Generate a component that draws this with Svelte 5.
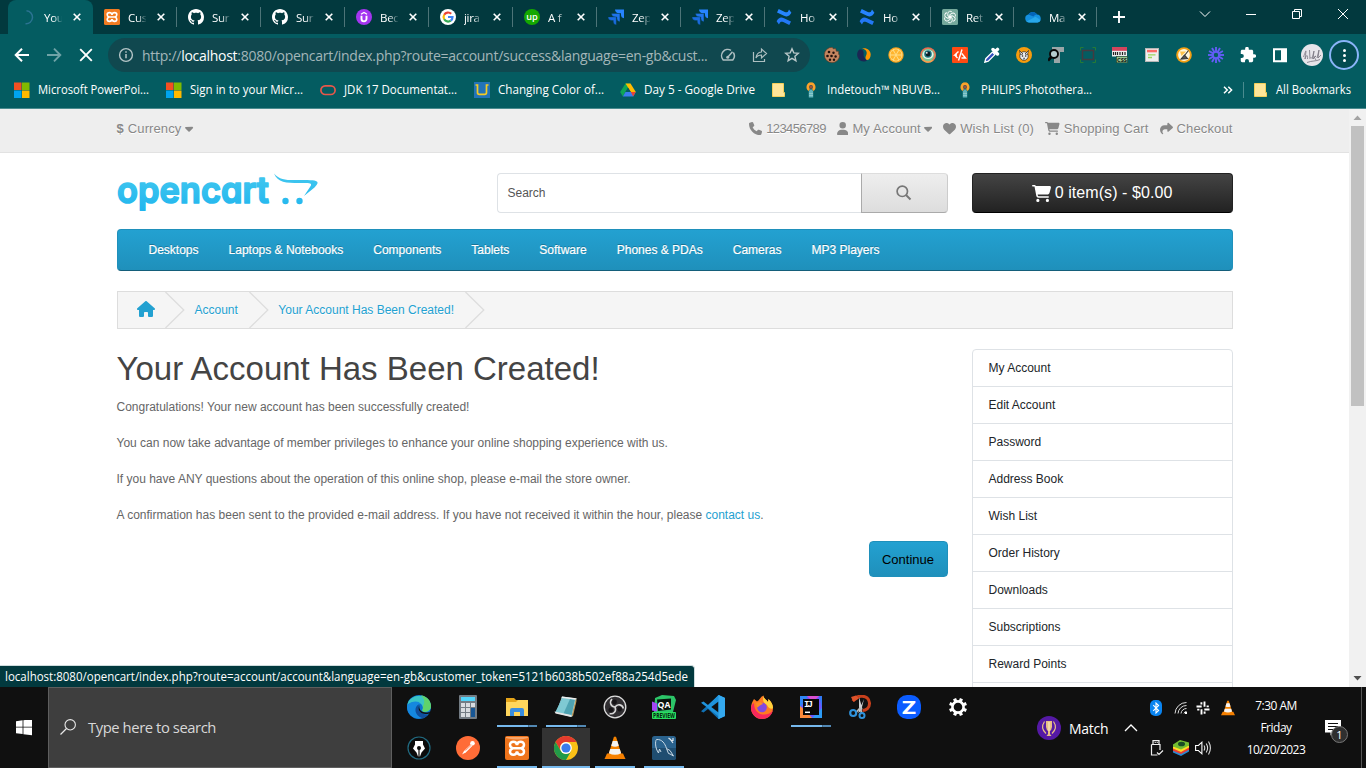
<script>
  const tabs = [
    { icon: 'spinner', title: 'You', active: true },
    { icon: 'xampp', title: 'Cus' },
    { icon: 'github', title: 'Sur' },
    { icon: 'github', title: 'Sur' },
    { icon: 'udemy', title: 'Bec' },
    { icon: 'google', title: 'jira' },
    { icon: 'upwork', title: 'A f' },
    { icon: 'jira', title: 'Zep' },
    { icon: 'jira', title: 'Zep' },
    { icon: 'confluence', title: 'Ho' },
    { icon: 'confluence', title: 'Ho' },
    { icon: 'gpt', title: 'Ret' },
    { icon: 'cloud', title: 'Ma' }
  ];
  const extensions = ['cookie', 'similar', 'orange', 'eye', 'redslash', 'dropper', 'palette', 'lens', 'frame', 'css', 'page', 'broom', 'loom', 'puzzle', 'sidepanel', 'profile'];
  const bookmarks = [
    { icon: 'ms', text: 'Microsoft PowerPoi...', width: 152, textWidth: 111 },
    { icon: 'ms', text: 'Sign in to your Micr...', width: 154, textWidth: 113 },
    { icon: 'oracle', text: 'JDK 17 Documentat...', width: 154, textWidth: 113 },
    { icon: 'ubook', text: 'Changing Color of...', width: 146, textWidth: 106 },
    { icon: 'drive', text: 'Day 5 - Google Drive', width: 151, textWidth: 111 },
    { icon: 'note', text: '', width: 32 },
    { icon: 'bulb', text: 'Indetouch™ NBUVB...', width: 154, textWidth: 113 },
    { icon: 'bulb', text: 'PHILIPS Photothera...', width: 154, textWidth: 111 }
  ];
  const menu = ['Desktops', 'Laptops & Notebooks', 'Components', 'Tablets', 'Software', 'Phones & PDAs', 'Cameras', 'MP3 Players'];
  const account = ['My Account', 'Edit Account', 'Password', 'Address Book', 'Wish List', 'Order History', 'Downloads', 'Subscriptions', 'Reward Points', ''];
  const apps = [
    ['edge'], ['calc'], ['folder', 'multi'], ['notepad', 'multi'], ['obs'], ['aqua'], ['vscode'], ['firefox'], ['intellij', 'multi'], ['snip'], ['zoom'], ['gear'],
    ['pen'], ['postman'], ['xampp', 'open'], ['chrome', 'open current'], ['vlc', 'open'], ['mysql', 'open']
  ];
  const fa = {
    phone: [512, 'M164.9 24.6c-7.7-18.6-28-28.5-47.4-23.2l-88 24C12.1 30.2 0 46 0 64C0 311.4 200.6 512 448 512c18 0 33.8-12.1 38.6-29.5l24-88c5.3-19.4-4.6-39.7-23.2-47.4l-96-40c-16.3-6.8-35.2-2.1-46.3 11.6L304.7 368C234.3 334.7 177.3 277.7 144 207.3L193.3 167c13.7-11.2 18.4-30 11.6-46.3l-40-96z'],
    user: [448, 'M224 256A128 128 0 1 0 224 0a128 128 0 1 0 0 256zm-45.7 48C79.8 304 0 383.8 0 482.3C0 498.7 13.3 512 29.7 512H418.3c16.4 0 29.7-13.3 29.7-29.7C448 383.8 368.2 304 269.7 304H178.3z'],
    heart: [512, 'M47.6 300.4L228.3 469.1c7.5 7 17.4 10.9 27.7 10.9s20.2-3.9 27.7-10.9L464.4 300.4c30.4-28.3 47.6-68 47.6-109.5v-5.8c0-69.9-50.5-129.5-119.4-141C347 36.5 300.6 51.4 268 84L256 96 244 84c-32.6-32.6-79-47.5-124.6-39.9C50.5 55.6 0 115.2 0 185.1v5.8c0 41.5 17.2 81.2 47.6 109.5z'],
    cart: [576, 'M0 24C0 10.7 10.7 0 24 0H69.5c22 0 41.5 12.8 50.6 32h411c26.3 0 45.5 25 38.6 50.4l-41 152.3c-8.5 31.4-37 53.3-69.5 53.3H170.7l5.4 28.5c2.2 11.3 12.1 19.5 23.6 19.5H488c13.3 0 24 10.7 24 24s-10.7 24-24 24H199.7c-34.6 0-64.3-24.6-70.7-58.5L77.4 54.5c-.7-3.8-4-6.5-7.9-6.5H24C10.7 48 0 37.3 0 24zM128 464a48 48 0 1 1 96 0 48 48 0 1 1 -96 0zm336-48a48 48 0 1 1 0 96 48 48 0 1 1 0-96z'],
    share: [512, 'M307 34.8c-11.5 5.1-19 16.6-19 29.2v64H176C78.8 128 0 206.8 0 304C0 417.3 81.5 467.9 100.2 478.1c2.5 1.4 5.3 1.9 8.1 1.9c10.9 0 19.7-8.9 19.7-19.7c0-7.5-4.3-14.4-9.8-19.5C108.8 431.9 96 414.4 96 384c0-53 43-96 96-96h96v64c0 12.6 7.4 24.1 19 29.2s25 3 34.4-5.4l160-144c6.7-6.1 10.6-14.7 10.6-23.8s-3.8-17.7-10.6-23.8l-160-144c-9.4-8.5-22.9-10.6-34.4-5.4z'],
    caret: [320, 'M137.4 374.6c12.5 12.5 32.8 12.5 45.3 0l128-128c9.2-9.2 11.9-22.9 6.9-34.9s-16.6-19.8-29.6-19.8L32 192c-12.9 0-24.6 7.8-29.6 19.8s-2.2 25.7 6.9 34.9l128 128z'],
    house: [576, 'M575.8 255.5c0 18-15 32.1-32 32.1h-32l.7 160.2c0 2.7-.2 5.4-.5 8.1V472c0 22.1-17.9 40-40 40H392c-22.1 0-40-17.9-40-40V384c0-17.7-14.3-32-32-32H256c-17.7 0-32 14.3-32 32v88c0 22.1-17.9 40-40 40H104c-22.1 0-40-17.9-40-40V287.6H32c-18 0-32-14-32-32.1c0-9 3-17 10-24L266.4 8c7-7 15-8 22-8s15 2 21 7L564.8 231.5c8 7 12 15 11 24z']
  };
</script>

{#snippet solid(name, size)}
  <svg class="fa" viewBox="0 0 {fa[name][0]} 512" width={(size * fa[name][0]) / 512} height={size}><path fill="currentColor" d={fa[name][1]} /></svg>
{/snippet}

{#snippet small(name)}
  <svg class="ico" viewBox="0 0 16 16" width="16" height="16">
    {#if name === 'spinner'}
      <path d="M7 1.500a6.500 6.500 0 0 1-1 13" transform="translate(-0.500 0.300)" fill="none" stroke="#2b7392" stroke-width="1.500" />
    {:else if name === 'xampp'}
      <rect width="16" height="16" rx="1.500" fill="#f27c22" />
      <path d="M8 5.800C7.600 2.900 3.200 3 3.200 5.700c0 1.200.8 1.900 1.800 2.300C4 8.400 3.200 9.100 3.200 10.300c0 2.700 4.400 2.800 4.800-.1.400 2.900 4.800 2.800 4.800.1 0-1.200-.8-1.900-1.800-2.300 1-.4 1.800-1.100 1.800-2.300 0-2.700-4.400-2.800-4.800.1zM5.500 8h5" fill="none" stroke="#fff" stroke-width="1.600" />
    {:else if name === 'github'}
      <path fill="#fff" d="M8 0C3.58 0 0 3.58 0 8c0 3.54 2.29 6.53 5.47 7.59.4.07.55-.17.55-.38 0-.19-.01-.82-.01-1.49-2.01.37-2.53-.49-2.69-.94-.09-.23-.48-.94-.82-1.13-.28-.15-.68-.52-.01-.53.63-.01 1.08.58 1.23.82.72 1.21 1.87.87 2.33.66.07-.52.28-.87.51-1.07-1.78-.2-3.64-.89-3.64-3.95 0-.87.31-1.59.82-2.15-.08-.2-.36-1.02.08-2.12 0 0 .67-.21 2.2.82.64-.18 1.32-.27 2-.27s1.36.09 2 .27c1.53-1.04 2.2-.82 2.2-.82.44 1.1.16 1.92.08 2.12.51.56.82 1.27.82 2.15 0 3.07-1.87 3.75-3.65 3.95.29.25.54.73.54 1.48 0 1.07-.01 1.93-.01 2.2 0 .21.15.46.55.38A8.01 8.01 0 0016 8c0-4.42-3.58-8-8-8z" />
    {:else if name === 'udemy'}
      <circle cx="8" cy="8" r="8" fill="#a435f0" />
      <path d="M5.500 6.800v3a2.500 2.600 0 0 0 5 0v-3" fill="none" stroke="#fff" stroke-width="1.900" />
      <path d="M5 5.200L8 3.400l3 1.800" fill="none" stroke="#fff" stroke-width="1.300" />
    {:else if name === 'google'}
      <circle cx="8" cy="8" r="8" fill="#fff" />
      <g fill="none" stroke-width="2.200">
        <path d="M4.200 5.700A4.500 4.500 0 0 1 11.200 4.800" stroke="#ea4335" />
        <path d="M4.200 5.700a4.600 4.600 0 0 0 0 4.600" stroke="#fbbc05" />
        <path d="M4.200 10.300a4.500 4.500 0 0 0 6.600 1.300" stroke="#34a853" />
        <path d="M10.800 11.600A4.500 4.500 0 0 0 12.500 8H8" stroke="#4285f4" />
      </g>
    {:else if name === 'upwork'}
      <circle cx="8" cy="8" r="8" fill="#14a800" />
      <text x="8" y="10.600" text-anchor="middle" font-size="9.500" font-weight="600" fill="#fff" textLength="11.500" lengthAdjust="spacingAndGlyphs">up</text>
    {:else if name === 'jira'}
      <path d="M7 .5h9v8.800a3.600 3.600 0 0 1-3-3.500V4.200h-2A3.800 3.800 0 0 1 7 .5z" fill="#2684ff" />
      <path d="M3.500 4.500h8.400v8.300a3.600 3.600 0 0 1-3-3.500V8h-1.600a3.800 3.800 0 0 1-3.800-3.500z" fill="#1f74ec" stroke="#02393e" stroke-width="0.300" />
      <path d="M0 8h8.300v8a3.600 3.600 0 0 1-3-3.500v-1H3.800A3.800 3.800 0 0 1 0 8z" fill="#1a6ce0" stroke="#02393e" stroke-width="0.300" />
    {:else if name === 'confluence'}
      <path d="M.6 12.200C2.600 8.900 4.600 7.700 8 9.300l7 3.200-1.700 3.400-6.100-2.800c-1.700-.8-2.700-.5-3.500 1L3 15.600z" fill="#2378f5" />
      <path d="M15.400 3.800C13.400 7.100 11.400 8.300 8 6.700L1 3.500 2.700.1l6.100 2.800c1.700.8 2.700.5 3.500-1L13 .4z" fill="#2684ff" />
    {:else if name === 'gpt'}
      <rect width="16" height="16" rx="1.500" fill="#75a99c" />
      <g fill="none" stroke="#fff" stroke-width="0.900">
        {#each [0, 60, 120, 180, 240, 300] as a (a)}
          <path transform="rotate({a} 8 8)" d="M5.800 6.900V4.500a2.400 2.400 0 0 1 4.400-1.200M5.800 6.900l3.700 2" />
        {/each}
      </g>
    {:else if name === 'cloud'}
      <path d="M4 13.400a4 4 0 0 1-.6-7.900A5 5 0 0 1 12 5.500a4 4 0 0 1 .6 7.900z" fill="#1490df" />
      <path d="M3.400 5.500a5 5 0 0 1 8.600 0c-1.600 0-2.600.8-3.600 1.900z" fill="#0364b8" />
      <path d="M1.500 12.500l9-4.700 5 3.300a3 3 0 0 1-2.900 2.300H4z" fill="#28a8ea" />
    {:else if name === 'cookie'}
      <path d="M8.500.3a7.700 7.700 0 1 0 7.200 7.500l-1-.4V4.300l-2.400-.1-.5-2.600-2.600.2z" fill="#c48660" stroke="#55341f" stroke-width="0.600" />
      <g fill="#22120c"><circle cx="5" cy="5" r="1.300" /><circle cx="9.500" cy="5.800" r="1.200" /><circle cx="3.500" cy="9" r="1.300" /><circle cx="7.500" cy="9" r="1.300" /><circle cx="11.600" cy="9.500" r="1.200" /><circle cx="6" cy="12.800" r="1.200" /><circle cx="10" cy="12.800" r="1.200" /></g>
    {:else if name === 'similar'}
      <path d="M3.600 2.500C6.800 2 8 4.500 7.600 7c-.4 2.500 1 4.300 3.400 6.500-2 1.600-6 1.300-8.200-1.200C.4 9.300.6 4.500 3.600 2.500z" fill="#1b2653" />
      <path d="M6 1.500c4.500-1.200 8.700 1.600 8.700 6 0 3-1.400 5-3.400 5.600-2.400-.8-2-3-1-5C11.600 5 10 2.200 6 1.500z" fill="#ff9400" />
    {:else if name === 'orange'}
      <circle cx="8" cy="8" r="7.700" fill="#f8a11b" /><circle cx="8" cy="8" r="6.500" fill="#ffdf8b" />
      {#each [0, 60, 120, 180, 240, 300] as a (a)}
        <path transform="rotate({a} 8 8)" d="M8 7.200L5.700 3q2.300-1.500 4.600 0z" fill="#ffb52e" />
      {/each}
    {:else if name === 'eye'}
      <circle cx="8" cy="8" r="7.800" fill="#ec6a4e" /><path d="M.3 9a7.800 7.800 0 0 0 13 4.700L8 8z" fill="#f3a24e" /><path d="M13.500 2.500a7.800 7.800 0 0 1 0 11L8 8z" fill="#e27f5b" /><circle cx="8" cy="8" r="6.200" fill="#7fc795" /><ellipse cx="8" cy="7.500" rx="5.400" ry="4.500" fill="#e6f5ec" /><circle cx="8" cy="7" r="3.800" fill="#1a7781" /><circle cx="8" cy="7" r="2.400" fill="#0a1c24" /><circle cx="6.800" cy="5.800" r="0.900" fill="#fff" />
    {:else if name === 'redslash'}
      <rect width="16" height="16" rx="1" fill="#ff4a12" />
      <path d="M10 2.500L6.500 13.500M6.500 4.500L2.800 8H5M2.800 8L5.500 11M9.800 6.500L13.500 11H9.500" fill="none" stroke="#fff" stroke-width="1.400" />
    {:else if name === 'dropper'}
      <path d="M.8 15.200l1-3.500 6.600-6.600 2.500 2.500-6.600 6.600z" fill="#334ebd" stroke="#fff" stroke-width="1.300" />
      <path d="M9 2.500l4.500 4.500M10.800 5L13.500 2.400" stroke="#fff" stroke-width="3.400" stroke-linecap="round" />
    {:else if name === 'palette'}
      <circle cx="8" cy="8" r="8" fill="#f79c0d" /><ellipse cx="8" cy="9" rx="4.200" ry="4.300" fill="#eee" stroke="#222" stroke-width="0.700" /><path d="M3.500 3.500L7 7l-2.500.5zM12.500 3.500L9 7l2.500.5z" fill="#fff" stroke="#222" stroke-width="0.700" /><circle cx="6.500" cy="9" r="0.800" fill="#222" /><circle cx="9.700" cy="9" r="0.800" fill="#222" /><path d="M8 10l1 2-2 .5z" fill="#345" />
    {:else if name === 'lens'}
      <path d="M4 0h12v5h-4v11H6V6H4z" fill="#9aa6a8" /><circle cx="6" cy="7" r="4" fill="#b6cdd0" stroke="#080808" stroke-width="1.900" /><path d="M3.300 10L0 13.500" stroke="#080808" stroke-width="2.600" />
    {:else if name === 'frame'}
      <rect x="2.500" y="3.500" width="11" height="9" fill="none" stroke="#443b40" stroke-width="1.500" /><path d="M.5 3.500v-3h3M12.500.5h3v3M15.500 12.500v3h-3M3.500 15.500h-3v-3" stroke="#267b35" fill="none" />
    {:else if name === 'css'}
      <rect x="0" y="0" width="15" height="9.500" fill="#eee" /><rect x="0" y="0" width="15" height="3.800" fill="#d4445c" /><path d="M1.500 5v3M3.500 5v3M5.500 5v3M8 5v3M10.500 5v3M13 5v3" stroke="#222" stroke-width="1.200" /><rect x="4.500" y="9.500" width="11" height="6.300" fill="#9bc992" stroke="#223e2a" stroke-width="0.600" /><text x="10" y="14.900" text-anchor="middle" font-size="5.800" font-weight="700" fill="#111">CSS</text>
    {:else if name === 'page'}
      <rect x="1.500" y="1.500" width="13" height="13" fill="#eee" stroke="#b6b6b6" /><rect x="3" y="2.800" width="10" height="2.500" fill="#fb6b68" /><path d="M4 7.800h7.500M4 10.500h4" stroke="#9bd45e" stroke-width="1.300" />
    {:else if name === 'broom'}
      <circle cx="8" cy="8" r="7.800" fill="#f6a012" /><circle cx="8" cy="8" r="5.900" fill="#fff7dd" /><path d="M4 4.500h6L5.500 9z" fill="#ffc34a" /><path d="M12.500 3.500L8.500 8.500M5 12l3.500-4 3 3.500z" stroke="#333" stroke-width="1.100" fill="#555" />
    {:else if name === 'loom'}
      <g stroke="#625df5" stroke-width="1.900">
        {#each [0, 30, 60, 90, 120, 150, 180, 210, 240, 270, 300, 330] as a (a)}<path transform="rotate({a} 8 8)" d="M8 0v5.200" />{/each}
      </g><circle cx="8" cy="8" r="3" fill="none" stroke="#625df5" stroke-width="1.600" />
    {:else if name === 'puzzle'}
      <path transform="translate(-0.700 -0.900) scale(0.730)" fill="#fff" d="M20.500 11H19V7c0-1.100-.9-2-2-2h-4V3.500a2.500 2.500 0 0 0-5 0V5H4c-1.100 0-2 .9-2 2v3.800h1.500a2.700 2.700 0 0 1 0 5.400H2V20c0 1.100.9 2 2 2h3.800v-1.500a2.700 2.700 0 0 1 5.400 0V22H17c1.100 0 2-.9 2-2v-4h1.500a2.500 2.500 0 0 0 0-5z" />
    {:else if name === 'sidepanel'}
      <path fill="#fff" fill-rule="evenodd" d="M1 1.200h14v14H1zM3 3.200v10h6v-10z" />
    {:else if name === 'ms'}
      <path d="M0 .5h7.500V8H0z" fill="#f25022" /><path d="M8 .5h7.500V8H8z" fill="#7fba00" /><path d="M0 8.500h7.500V16H0z" fill="#00a4ef" /><path d="M8 8.500h7.500V16H8z" fill="#ffb900" />
    {:else if name === 'oracle'}
      <rect x="0.900" y="3.900" width="14.200" height="8.600" rx="4.300" fill="none" stroke="#e8574a" stroke-width="1.700" />
    {:else if name === 'ubook'}
      <rect width="16" height="16" fill="#2374b8" /><path d="M1.500 3H3.500v7.500q0 1.800 1.800 1.800h5.400q1.800 0 1.800-1.800V3h2" fill="none" stroke="#f5cb22" stroke-width="1.700" />
    {:else if name === 'drive'}
      <path d="M5.500 1.500h5L5.500 10 2.800 14.500.2 10z" fill="#0fa456" /><path d="M5.500 1.500h5L15.800 10h-5z" fill="#ffba00" /><path d="M5.500 10h10.300l-2.600 4.500H2.800z" fill="#3b7ded" /><path d="M8 5.800l2.700 4.200H5.500z" fill="#045c61" /><path d="M10.800 10h5l-2.600 4.500z" fill="#ea4335" />
    {:else if name === 'note'}
      <path d="M1.500 1.500h11v9h1v4h-12z" fill="#ffe599" stroke="#f4cf5a" />
    {:else if name === 'bulb'}
      <path d="M5.800 9L8 7l2.200 2v6.500H5.800z" fill="#61b4bb" /><path d="M8 1.500A3.600 3.600 0 0 1 9.700 8M8 1.500A3.600 3.600 0 0 0 6.300 8" fill="none" stroke="#fba22a" stroke-width="2.600" /><circle cx="8" cy="5" r="1.800" fill="#9b533e" /><path d="M6 11.500h4M6 13.500h4" stroke="#8cc8cc" />
    {/if}
  </svg>
{/snippet}

{#snippet vlc(size)}
  <svg class="ico" viewBox="0 0 24 24" width={size} height={size}>
    <path d="M4 17.500h16l2.500 5.500h-21z" fill="#f57f00" /><path d="M10.700 1.500Q12-.3 13.300 1.500L18.500 18.500q-6.500 3.500-13 0z" fill="#f58300" /><path d="M9.700 5h4.600l1.500 4.800q-3.800 1.700-7.600 0zM7.200 13h9.600l1.300 4.300q-6.100 3-12.200 0z" fill="#f3f3f3" />
  </svg>
{/snippet}

{#snippet app(name)}
  <svg class="ico" viewBox="0 0 24 24" width="24" height="24">
    {#if name === 'edge'}
      <circle cx="12" cy="12" r="12" fill="#0c74cf" />
      <path d="M.3 10C2-1.500 22-3.500 24 11c.3 5-5 6.800-8 5.500-2-1 .2-2-.2-4.700C15 7 5.500 4.500.3 10z" fill="#3ac5c5" />
      <path d="M14 .2C20 1.500 24 5.500 24 11c0 4.500-5 6.800-8 5.500-2-1 1-2-.3-5C18 8 18 4 14 .2z" fill="#5fd36b" />
      <path d="M.3 10C4 6 12 5 13.500 9 8 9 7.500 18 15 22.500 8 26-1.500 19 .3 10z" fill="#1588df" />
      <path d="M12.500 9.300c-3 3.200-1 10.700 8.500 10.200-2 2.800-4 3.600-6 3.600-8-2.500-8.500-12-2.500-13.800z" fill="#114e9c" />
      <path d="M12.500 10c-1 3 1 7.500 6.500 7.600 2 0 3.500-.6 4.500-1.300l-1.200 2.200c-8 2.500-13-3.700-9.800-8.500z" fill="#101010" />
    {:else if name === 'calc'}
      <rect x="3" y="0" width="18" height="24" rx="1" fill="#737c84" /><rect x="5" y="2" width="14" height="4" fill="#51d5fb" />
      <path d="M5 8h4v4H5zM10 8h4v4h-4zM15 8h4v4h-4zM5 13h4v4H5zM10 13h4v4h-4zM5 18h4v4H5zM10 18h4v4h-4z" fill="#d8dce0" /><path d="M15 13h4v9h-4z" fill="#175694" />
    {:else if name === 'folder'}
      <path d="M1 3h8l2 2h12v16H1z" fill="#e5a51a" /><path d="M1 7h10l2-2h10v16H1z" fill="#ffd65c" /><path d="M5 21v-6q0-2 2-2h10q2 0 2 2v6h-4v-4H9v4z" fill="#3a8dde" />
    {:else if name === 'notepad'}
      <path d="M8 1.500l14.500 2-4.500 18.500-16-4z" fill="#9fd6dd" /><path d="M8.500 3L21 4.500l-3.500 16L1.500 17z" fill="#4fa3b2" /><path d="M8.500 3L16 4 9.500 18.500l-8-1.500z" fill="#7fc9d3" /><path d="M8 1.500l14.500 1.700-.5 1.500L7.500 3z" fill="#eee" /><path d="M22 3l.5 3-3.500 15-1.500.5z" fill="#bf9a5b" /><path d="M.5 16.500l17 3.500-.5 2L1.500 18.500z" fill="#e5e5e5" />
    {:else if name === 'obs'}
      <circle cx="12" cy="12" r="10.800" fill="#302e31" stroke="#ddd" stroke-width="1.300" />
      {#each [0, 120, 240] as a (a)}<path transform="rotate({a} 12 12)" d="M12 12C7.500 11.500 6.200 7 9 4" fill="none" stroke="#d6d6d6" stroke-width="1.600" /><circle cx="11.500" cy="7" r="2.400" transform="rotate({a} 12 12)" fill="#151316" />{/each}
    {:else if name === 'aqua'}
      <path d="M3 3l7-3 12 1 2 4-3 12H2z" fill="#2cc568" /><path d="M0 6.500l5 2v8l-5-1z" fill="#a348f4" /><path d="M5 4.500l14-1v11l-13 1.500z" fill="#08140d" />
      <text x="12" y="12.500" text-anchor="middle" font-size="9.500" font-weight="700" fill="#fff" textLength="13" lengthAdjust="spacingAndGlyphs">QA</text>
      <rect x="0" y="17" width="24" height="7" rx="1" fill="#27e060" /><text x="12" y="22.800" text-anchor="middle" font-size="6.200" font-weight="700" fill="#06260f" textLength="22" lengthAdjust="spacingAndGlyphs">PREVIEW</text>
    {:else if name === 'vscode'}
      <path d="M17.500 0L24 3v18l-6.500 3L7 14l-4.500 3.500L0 16.300 14.500 3.500z" fill="#1071b4" /><path d="M17.500 24L24 21V3l-6.500-3L7 10 2.500 6.500 0 7.700 17 21z" fill="#1f93dc" /><path d="M17.500 6.500v11L10.300 12z" fill="#101010" /><path d="M17.500 0L24 3v18l-6.500 3z" fill="#35a9ef" />
    {:else if name === 'firefox'}
      <path d="M4 4l3 2.500C10 5 10 2 13.500.5c0 3 3 4 4.500 6.500l.5-3c3 3 4.500 6 4.500 9a11 11 0 0 1-22 0c0-4 1.500-6.500 3-9z" fill="#ff7a22" /><path d="M13.500.5c0 3 3 4 4.500 6.500l.5-3c3 3 4.500 6 4.500 9-1 2-5 0-6-3-2-2-5-2-3.500-9.500z" fill="#ffd23c" /><path d="M1 13c0 6 5 11 11 11s10-4 11-9c-4 7-19 7-19-7-2 1-3 3-3 5z" fill="#f7285c" /><circle cx="12" cy="12.500" r="4.800" fill="#8248df" /><path d="M6 8c3-1 6-1 7 1-3 .5-4 3-6 3.500z" fill="#ff8d22" />
    {:else if name === 'intellij'}
      <path d="M1 1h22v22H1z" fill="#6b57ff" /><path d="M1 1h8L1 13z" fill="#2f86f5" /><path d="M1 11l6 5 6 7H1z" fill="#fc8a3b" /><path d="M8 1h12l-6 6z" fill="#d94fd0" /><path d="M20 1h3v12z" fill="#3179f5" /><path d="M13 23l10-10v10z" fill="#2d9cf7" /><rect x="4" y="4" width="16" height="16" fill="#080808" /><path d="M6 17.300h5" stroke="#fff" stroke-width="1.500" /><text class="mono" x="5" y="12" font-size="9" font-weight="700" fill="#fff" textLength="9">IJ</text>
    {:else if name === 'snip'}
      <path d="M5 6C8-.5 21-1 21.500 8c.3 5-3.500 7.500-7 7.500" fill="none" stroke="#c8401c" stroke-width="3" /><path d="M3 2l5-1.500 3 3L5.500 7z" fill="#e0532a" /><path d="M11 2l3.500 12-3.500 3zM16 4l-3 12-3 2z" fill="#cfcfcf" /><path d="M12.500 12.500L8 17.500M12.500 13l1 5" stroke="#bbb" stroke-width="1.800" /><circle cx="5.200" cy="18" r="3" fill="none" stroke="#2f93dd" stroke-width="2.200" /><circle cx="14" cy="20.500" r="2.500" fill="none" stroke="#2f93dd" stroke-width="2" />
    {:else if name === 'zoom'}
      <rect width="24" height="24" rx="10" fill="#0b5cff" /><text x="12" y="18.500" text-anchor="middle" font-size="18.500" font-weight="700" fill="#fff" textLength="14" lengthAdjust="spacingAndGlyphs">Z</text>
    {:else if name === 'gear'}
      <circle cx="12" cy="12" r="5.600" fill="none" stroke="#fff" stroke-width="2.600" />
      {#each [22.5, 67.5, 112.5, 157.5, 202.5, 247.5, 292.5, 337.5] as a (a)}<path transform="rotate({a} 12 12)" d="M12 3v3.500" stroke="#fff" stroke-width="3.200" />{/each}
    {:else if name === 'pen'}
      <circle cx="12" cy="12" r="11" fill="#0b0b0b" stroke="#216a80" stroke-width="1.200" /><path d="M8 5h8v3.500l2 4-3.500 4-1.500 4h-2l-1.500-4L6 12.500l2-4z" fill="#fff" /><path d="M12 13v8" stroke="#0b0b0b" stroke-width="1.200" /><circle cx="12" cy="12" r="2" fill="#0b0b0b" />
    {:else if name === 'postman'}
      <circle cx="12" cy="12" r="12" fill="#ff6c37" /><path d="M6 18.500l2-3.500L15 8.200l1.500 1.500-6.500 6.500z" fill="#fff" /><circle cx="16.500" cy="7.300" r="2.300" fill="#fff" /><path d="M9.500 14.500l6-5.500" stroke="#ff6c37" stroke-width="0.700" />
    {:else if name === 'xampp'}
      <rect width="24" height="24" rx="2" fill="#ef741b" /><path d="M1 2q11 3 22 0v-1H1z" fill="#f6a56b" />
      <path d="M12 9C11.400 4.500 5 4.700 5 8.700c0 1.800 1.200 3 2.800 3.500C6.200 12.700 5 13.900 5 15.700c0 4 6.400 4.200 7-.3.600 4.500 7 4.300 7 .3 0-1.800-1.200-3-2.800-3.500 1.600-.5 2.800-1.700 2.800-3.500 0-4-6.400-4.200-7 .3zM8 12.200h8" fill="none" stroke="#fff" stroke-width="2.500" />
    {:else if name === 'chrome'}
      <circle cx="12" cy="12" r="12" fill="#fbc116" /><path d="M1.600 6A12 12 0 0 1 22.400 6H12a6 6 0 0 0-5.200 9z" fill="#e33b2e" /><path d="M1.600 6A12 12 0 0 0 12 24l5.200-9a6 6 0 0 1-10.400 0z" fill="#229a49" /><circle cx="12" cy="12" r="5.900" fill="#fff" /><circle cx="12" cy="12" r="4.600" fill="#3a7cec" />
    {:else if name === 'mysql'}
      <rect width="24" height="24" rx="2.500" fill="#2a628d" /><path d="M0 12h24v9.500q0 2.500-2.500 2.500h-19Q0 24 0 21.500z" fill="#1f4d70" /><path d="M6.500 17C3 12 3 5 4.500 3.500 10 3 13 7.500 14.500 12.500l3.500 2 3.500 5.500-3.500-2M6.500 17l1-4 1.500 3M14.500 12.500l2 5 1.500.5" fill="none" stroke="#c9d9e5" stroke-width="1" /><path d="M16.500 2l2 1.500L21 7M18.500 4.500H21V2" fill="none" stroke="#dfe8ef" stroke-width="1.200" />
    {/if}
  </svg>
{/snippet}

<div class="screen">
  <header class="chrome">
    <div class="tabstrip">
      {#each tabs as t, i (i)}
        <div class="tab" class:active={t.active} class:narrow={i > 8}>
          {@render small(t.icon)}
          <span class="title">{t.title}</span>
          <svg class="close" viewBox="0 0 8 8" width="8" height="8"><path d="M.7.7l6.600 6.600M7.300.7L.7 7.300" stroke="#fff" stroke-width="1.600" /></svg>
        </div>
      {/each}
      <svg class="newtab" viewBox="0 0 12 12" width="12" height="12"><path d="M6 0v12M0 6h12" stroke="#fff" stroke-width="1.900" /></svg>
      <div class="window-buttons">
        <svg viewBox="0 0 12 12" width="12" height="12"><path d="M1 3.500l5 5 5-5" /></svg>
        <svg viewBox="0 0 12 12" width="12" height="12"><path d="M1 6.500h10" /></svg>
        <svg viewBox="0 0 12 12" width="12" height="12"><path d="M1.500 3.500h7v7h-7zM3.500 3.500v-2h7v7h-2" /></svg>
        <svg viewBox="0 0 12 12" width="12" height="12"><path d="M1 1l10 10M11 1L1 11" /></svg>
      </div>
    </div>
    <div class="toolbar">
      <div class="cell"><svg viewBox="0 0 16 16" width="16" height="16"><path d="M15 8H2M8 1.700L1.700 8 8 14.300" fill="none" stroke="#fff" stroke-width="2" /></svg></div>
      <div class="cell"><svg viewBox="0 0 16 16" width="16" height="16"><path d="M1 8h13M8 1.700L14.300 8 8 14.300" fill="none" stroke="#70a3a7" stroke-width="1.900" /></svg></div>
      <div class="cell"><svg viewBox="0 0 16 16" width="16" height="16"><path d="M2.200 2.200l11.600 11.600M13.800 2.200L2.200 13.800" stroke="#fff" stroke-width="1.900" /></svg></div>
      <div class="omnibox">
        <svg class="info" viewBox="0 0 16 16" width="16" height="16"><circle cx="8" cy="8" r="6.400" fill="none" stroke="#b5c5c7" stroke-width="1.400" /><path d="M8 7v4.300M8 4.300v1.500" stroke="#b5c5c7" stroke-width="1.500" /></svg>
        <span class="url">http://<b>localhost</b>:8080/opencart/index.php?route=account/success&amp;language=en-gb&amp;cust...</span>
        <div class="cell"><svg viewBox="0 0 16 16" width="16" height="16"><path d="M13.300 5.500a6.300 6.300 0 0 1-.5 7.500H3.200A6.300 6.300 0 0 1 11 3.300M7.500 10.500L12.500 4.800" fill="none" stroke="#aebfc1" stroke-width="1.500" /><circle cx="7.700" cy="10.200" r="1.500" fill="#aebfc1" /></svg></div>
        <div class="cell"><svg viewBox="0 0 16 16" width="16" height="16"><path d="M1.500 5v9.500h11V12M9.500 5V2l5 4.500-5 4.500V8C7 8 5 9 4 11c.3-3.500 2.500-5.700 5.500-6z" fill="none" stroke="#aebfc1" stroke-width="1.200" /></svg></div>
        <div class="cell"><svg viewBox="0 0 16 16" width="16" height="16"><path d="M8 1.800l1.800 4.100 4.500.4-3.400 3 1 4.400L8 11.400l-3.900 2.300 1-4.400-3.400-3 4.500-.4z" fill="none" stroke="#b8c7c9" stroke-width="1.400" /></svg></div>
      </div>
      <div class="extensions">
        {#each extensions as e (e)}
          <div class="cell">
            {#if e === 'profile'}
              <svg viewBox="0 0 22 22" width="22" height="22"><circle cx="11" cy="11" r="11" fill="#e7e5ea" /><path d="M2.500 13c3-8 3-9 1.500 2 2-6 3-3 2.500 0M8.500 6l.5 9M9.500 14l1-1M11 15l2-8-1 8 3-3-2 1 2 3M16 14l2-8-1 8 3-3M6 18.500c5-2 9-1 13-3" fill="none" stroke="#77737f" stroke-width="0.800" /></svg>
            {:else}
              {@render small(e)}
            {/if}
          </div>
        {/each}
        <div class="cell"><span class="menu-ring"><i></i><i></i><i></i></span></div>
      </div>
    </div>
    <div class="bookmarks">
      {#each bookmarks as b, i (i)}
        <div class="bookmark" style:width="{b.width}px">
          {@render small(b.icon)}
          {#if b.text}<svg class="label" width={b.textWidth} height="18"><text x="0" y="13" textLength={b.textWidth} lengthAdjust="spacingAndGlyphs">{b.text}</text></svg>{/if}
        </div>
      {/each}
      <div class="overflow">
        <svg viewBox="0 0 10 8" width="10" height="8"><path d="M1 .7L4.300 4 1 7.300M5.300.7L8.600 4 5.300 7.300" fill="none" stroke="#fff" stroke-width="1.500" /></svg>
        <span class="divider"></span>
        {@render small('note')}
        <svg class="label" width="76" height="18"><text x="0" y="13" textLength="75" lengthAdjust="spacingAndGlyphs">All Bookmarks</text></svg>
      </div>
    </div>
  </header>

  <main class="viewport">
    <div class="page">
      <nav class="top">
        <div class="container top-row">
          <span class="currency"><b>$</b> Currency {@render solid('caret', 13)}</span>
          <ul class="links">
            <li>{@render solid('phone', 13)} <span class="phone">123456789</span></li>
            <li>{@render solid('user', 13)} My Account <span class="caret">{@render solid('caret', 13)}</span></li>
            <li>{@render solid('heart', 13)} Wish List (0)</li>
            <li>{@render solid('cart', 13)} Shopping Cart</li>
            <li>{@render solid('share', 13)} Checkout</li>
          </ul>
        </div>
      </nav>
      <div class="container">
        <div class="brand-row">
          <svg class="logo" viewBox="0 0 202 42" width="202" height="42">
            <defs><linearGradient id="logo-fill" gradientUnits="userSpaceOnUse" x1="0" y1="0" x2="0" y2="40"><stop offset="0" stop-color="#44c8ef" /><stop offset="1" stop-color="#1fb5ee" /></linearGradient></defs>
            <text x="0" y="31" font-size="37" textLength="152" lengthAdjust="spacingAndGlyphs">opencart</text>
            <path d="M157 1.500c7 8 16 6.500 30 6.500 15 0 16 1.500 10.500 7.500L187 24l6-9c2.500-3.500 1-4-7-4-15 0-25 .5-29-9.500z" fill="url(#logo-fill)" />
            <circle cx="168.500" cy="29" r="3.200" fill="url(#logo-fill)" /><circle cx="182.500" cy="29" r="3.200" fill="url(#logo-fill)" />
          </svg>
          <div class="search">
            <div class="field">Search</div>
            <div class="go"><svg viewBox="0 0 16 16" width="16" height="16"><circle cx="6.300" cy="6.300" r="5.200" fill="none" stroke="#777" stroke-width="1.700" /><path d="M10 10l4.500 4.500" stroke="#777" stroke-width="2" /></svg></div>
          </div>
          <div class="cart">{@render solid('cart', 17)} 0 item(s) - $0.00</div>
        </div>
        <nav class="menu">
          {#each menu as m (m)}<span>{m}</span>{/each}
        </nav>
        <div class="breadcrumb">
          {@render solid('house', 16)}
          <svg class="chev" viewBox="0 0 20 36" width="20" height="36"><path d="M.5 0L18.800 18 .5 36" /></svg>
          <span>Account</span>
          <svg class="chev" viewBox="0 0 20 36" width="20" height="36"><path d="M.5 0L18.800 18 .5 36" /></svg>
          <span>Your Account Has Been Created!</span>
          <svg class="chev" viewBox="0 0 20 36" width="20" height="36"><path d="M.5 0L18.800 18 .5 36" /></svg>
        </div>
        <div class="columns">
          <section class="content">
            <h1>Your Account Has Been Created!</h1>
            <p>Congratulations! Your new account has been successfully created!</p>
            <p>You can now take advantage of member privileges to enhance your online shopping experience with us.</p>
            <p>If you have ANY questions about the operation of this online shop, please e-mail the store owner.</p>
            <p>A confirmation has been sent to the provided e-mail address. If you have not received it within the hour, please <a href="#contact">contact us</a>.</p>
            <div class="actions"><button>Continue</button></div>
          </section>
          <aside class="list">
            {#each account as a (a)}<div>{a}</div>{/each}
          </aside>
        </div>
      </div>
    </div>
    <div class="scrollbar">
      <svg viewBox="0 0 17 17" width="17" height="17"><path d="M4.500 11h8L8.500 6.500z" fill="#a3a3a3" /></svg>
      <span class="thumb"></span>
      <svg viewBox="0 0 17 17" width="17" height="17"><path d="M4.500 6h8l-4 4.500z" fill="#505050" /></svg>
    </div>
    <div class="status"><svg width="686" height="18"><text x="0" y="13" textLength="683" lengthAdjust="spacingAndGlyphs">localhost:8080/opencart/index.php?route=account/account&amp;language=en-gb&amp;customer_token=5121b6038b502ef88a254d5ede</text></svg></div>
  </main>

  <footer class="taskbar">
    <div class="start"><svg viewBox="0 0 16 16" width="16" height="16"><path d="M0 1.200l6.600-.9v6.400H0zM7.400.2L16-.8v7.500H7.400zM0 7.600h6.600v6.500L0 13.200zM7.400 7.600H16v7.600l-8.600-1z" fill="#fff" /></svg></div>
    <div class="find">
      <svg viewBox="0 0 16 16" width="16" height="16"><circle cx="10.200" cy="5.800" r="5.200" fill="none" stroke="#e8e8e8" stroke-width="1.100" /><path d="M6.500 9.500L.5 15.500" stroke="#e8e8e8" stroke-width="1.200" /></svg>
      <span>Type here to search</span>
    </div>
    <div class="apps">
      {#each apps as [name, state], i (i)}
        <div class="app {state ?? ''}">
          {#if name === 'vlc'}{@render vlc(24)}{:else}{@render app(name)}{/if}
          {#if state}<span class="bar"></span>{/if}
        </div>
      {/each}
    </div>
    <div class="tray">
      <svg class="cup" viewBox="0 0 24 24" width="24" height="24"><circle cx="12" cy="12" r="12" fill="#5519a5" /><path d="M9 5h6v6q-.5 3-2 4v3l1.500 2h-5l1.500-2v-3q-1.500-1-2-4z" fill="#e8be86" /><path d="M7.500 5.500q-4.500 6.500 1.500 12M16.500 5.500q4.500 6.500-1.500 12" fill="none" stroke="#e8be86" stroke-width="1.200" /><path d="M12 6v9" stroke="#fbeccb" stroke-width="1" /></svg>
      <span class="match">Match</span>
      <svg class="up" viewBox="0 0 14 8" width="14" height="8"><path d="M1 7l6-6 6 6" fill="none" stroke="#fff" stroke-width="1.300" /></svg>
      <div class="tray-icons">
        <svg viewBox="0 0 16 16" width="16" height="16"><rect x="2" y="0" width="12" height="16" rx="5" fill="#0a84f0" /><path d="M5.200 5.200l5.400 5.300L8 13V3l2.600 2.500-5.400 5.300" fill="none" stroke="#fff" stroke-width="1.100" /></svg>
        <svg viewBox="0 0 16 16" width="16" height="16"><g fill="none" stroke="#ddd" stroke-width="1"><path d="M2 13.500A11.500 11.500 0 0 1 13.500 2.500M5 13.500A8.500 8.500 0 0 1 13.500 5.500M8 13.500a5.500 5.500 0 0 1 5.500-5" /><path d="M11 13.500a2.500 2.500 0 0 1 2.500-2" /></g><path d="M12 12h2v2h-2z" fill="#fff" /></svg>
        <svg viewBox="0 0 16 16" width="16" height="16">
          {#each [0, 90, 180, 270] as a (a)}<path transform="rotate({a} 8 8)" d="M1.500 6.500h5.200M6.400 2.200v2.200" stroke="#fff" stroke-width="1.900" />{/each}
        </svg>
        {@render vlc(16)}
        <svg viewBox="0 0 16 16" width="16" height="16"><path d="M5 4.500V.6h6v3.900M3.500 4.500h8.500V10M3.500 4.500V15h6M9 12.500l2 2 4-4" fill="none" stroke="#eee" stroke-width="1.200" /><path d="M6.700 2h1v1h-1zM8.700 2h1v1h-1z" fill="#fff" /></svg>
        <svg viewBox="0 0 16 16" width="16" height="16"><path d="M0 11l8-3 8 2v1.500L8 16l-8-3.500z" fill="#2a8ad2" /><path d="M0 8l8-3 8 2v2.800L8 14l-8-3.200z" fill="#ed3d34" /><path d="M0 6.500l8-3 8 2v2L8 12 0 8.500z" fill="#ffdc22" /><path d="M0 4.500L7 0l9 2.500v3L8 9.500 0 6.500z" fill="#74bd31" /><ellipse cx="8.500" cy="4" rx="3.500" ry="2.300" fill="#184c25" /></svg>
        <svg viewBox="0 0 16 16" width="16" height="16"><path d="M.6 5.500h2.800l3.500-3.300v11.600L3.400 10.500H.6z" fill="none" stroke="#fff" stroke-width="1.100" /><path d="M9 5.500q1.500 2.500 0 5M11.200 3.500q2.800 4.500 0 9M13.500 1.500q3.800 6.500 0 13" fill="none" stroke="#ddd" stroke-width="1.100" /></svg>
      </div>
      <div class="clock"><span>7:30 AM</span><span>Friday</span><span>10/20/2023</span></div>
      <div class="notice">
        <svg viewBox="0 0 16 16" width="16" height="16"><path d="M0 0h16v12.500H9l-3.500 3v-3H0z" fill="#fff" /><path d="M3 3.500h10M3 6.500h10M3 9.500h7" stroke="#101010" stroke-width="1.100" /></svg>
        <span class="badge">1</span>
      </div>
      <span class="edge"></span>
    </div>
  </footer>
</div>

<style>
  :global(body) { margin: 0; overflow: hidden; }
  * { box-sizing: border-box; }
  svg { display: block; flex: none; }
  .screen { width: 1366px; height: 768px; display: flex; flex-direction: column; overflow: hidden; font-family: "Open Sans", "Noto Sans", sans-serif; }
  .mono { font-family: "Liberation Mono", monospace; }
  .chrome { height: 109px; flex: none; background: #045c61; border-bottom: 1px solid #4a8b8f; }
  .tabstrip { height: 34px; display: flex; background: #02393e; padding-left: 8px; }
  .tab { width: 84px; flex: none; display: flex; align-items: center; padding-left: 11px; position: relative; }
  .tab.narrow { width: 83px; }
  .tab:not(.active)::after { content: ""; position: absolute; right: 0; top: 7px; width: 1px; height: 20px; background: #4d7478; }
  .tab.active { width: 85px; background: #045c61; border-radius: 8px 8px 0 0; padding-left: 12px; }
  .title { width: 18px; margin-left: 8px; white-space: nowrap; font-size: 11.500px; letter-spacing: -0.300px; color: #fff; mask-image: linear-gradient(90deg, #000 50%, rgba(0, 0, 0, 0.100)); }
  .close { margin-left: 11px; }
  .newtab { margin: 11px 0 0 16px; }
  .window-buttons { margin-left: auto; display: flex; gap: 34px; padding: 8px 17px 0 0; }
  .window-buttons path { fill: none; stroke: #fff; stroke-width: 1; }
  .toolbar { height: 38px; margin-top: 2px; display: flex; align-items: center; padding-left: 6px; }
  .cell { width: 32px; height: 34px; flex: none; display: flex; align-items: center; justify-content: center; }
  .omnibox { width: 702px; height: 34px; margin-left: 6px; flex: none; border-radius: 17px; background: #10484f; display: flex; align-items: center; padding: 0 2px 0 10px; }
  .url { flex: 1; margin-left: 8px; white-space: nowrap; color: #a3b6b9; font-size: 14px; letter-spacing: -0.275px; }
  .url b { font-weight: 400; color: #fff; }
  .extensions { display: flex; margin-left: 6px; }
  .menu-ring { width: 30px; height: 30px; flex: none; border: 2px solid #8ab4f8; border-radius: 50%; display: flex; flex-direction: column; gap: 2px; align-items: center; justify-content: center; background: #034b50; }
  .menu-ring i { width: 3px; height: 3px; background: #fff; border-radius: 50%; }
  .bookmarks { height: 32px; display: flex; align-items: center; padding-left: 14px; }
  .bookmark { display: flex; align-items: center; gap: 8px; flex: none; }
  .label { overflow: visible; }
  .label text, .status text { font-size: 12px; fill: #fff; }
  .overflow { margin-left: auto; display: flex; align-items: center; padding-right: 14px; }
  .divider { width: 1px; height: 16px; background: #4a8b8f; margin: 0 9px 0 10px; }
  .overflow .label { margin-left: 7px; }
  .viewport { height: 578px; flex: none; display: flex; position: relative; overflow: hidden; background: #fff; font-family: "Liberation Sans", Arial, sans-serif; }
  .page { width: 1349px; flex: none; }
  .container { width: 1116px; margin-left: 116.500px; }
  .top { height: 44px; background: #eee; border-bottom: 1px solid #e2e2e2; color: #888; font-size: 13px; text-shadow: 0 1px 0 #fff; }
  .top-row { display: flex; justify-content: space-between; height: 39px; align-items: center; }
  .currency { display: flex; align-items: center; gap: 4px; letter-spacing: 0.100px; }
  .links { display: flex; gap: 11.200px; list-style: none; margin: 0; padding: 0; letter-spacing: 0.120px; }
  .links li { display: flex; align-items: center; gap: 4px; white-space: nowrap; }
  .phone { letter-spacing: -0.600px; }
  .caret { margin-left: -1px; }
  .brand-row { display: flex; padding-top: 20px; height: 76px; }
  .logo { margin: -1px 178px 0 0; }
  .logo text { font-family: Inter, "Open Sans", sans-serif; font-weight: 600; font-feature-settings: "cv11"; fill: url(#logo-fill); stroke: url(#logo-fill); stroke-width: 1.700; stroke-linejoin: round; }
  .search { width: 451px; height: 40px; display: flex; font-size: 12px; color: #555; }
  .field { width: 364px; border: 1px solid #dee2e6; border-right: 0; border-radius: 4px 0 0 4px; padding: 11px 10px; line-height: 16px; }
  .go { flex: 1; display: flex; align-items: center; justify-content: center; border: 1px solid #ccc; border-left-color: #aaa; border-bottom-color: #aaa; border-top-color: #ddd; border-radius: 0 4px 4px 0; background: linear-gradient(#eee, #ddd); }
  .cart { width: 261px; height: 40px; margin-left: 24px; border-radius: 4px; border: 1px solid #222; border-bottom-color: #000; background: linear-gradient(#444, #222); color: #fff; font-size: 16px; letter-spacing: 0.080px; display: flex; align-items: center; justify-content: center; gap: 4px; }
  .menu { height: 42px; border-radius: 4px; border: 1px solid #1f90bb; border-color: #1f90bb #1f90bb #145e7a; background: linear-gradient(#23a1d1, #1f90bb); color: #fff; font-size: 12px; text-shadow: 0 -1px 0 rgba(0, 0, 0, 0.250); -webkit-text-stroke: 0.200px #fff; display: flex; gap: 30px; align-items: center; padding: 0 0 1px 31px; }
  .breadcrumb { height: 38px; margin-top: 20px; border: 1px solid #ddd; background: #f5f5f5; color: #23a1d1; display: flex; align-items: center; font-size: 12px; padding-left: 19.500px; text-shadow: 0 1px 0 #fff; }
  .breadcrumb .fa { margin-top: -3px; }
  .chev { margin: 0 9.500px 0 10px; }
  .breadcrumb span + .chev { margin-left: 11px; }
  .chev path { fill: none; stroke: #ddd; stroke-width: 1.300; }
  .columns { display: flex; gap: 24px; margin-top: 20px; }
  .content { width: 831px; color: #666; font-size: 12px; }
  h1 { margin: 0 0 9px; font-size: 33px; line-height: 40px; font-weight: 400; color: #444; }
  p { margin: 0 0 18px; line-height: 18px; }
  a { color: #23a1d1; text-decoration: none; }
  .actions { display: flex; justify-content: flex-end; margin-top: -1px; }
  button { width: 79px; height: 36px; border: 1px solid #1f90bb; border-radius: 4px; background: linear-gradient(#23a1d1, #1f90bb); font: 13px "Liberation Sans", Arial, sans-serif; color: #000; padding: 0; }
  .list { width: 261px; border: 1px solid #dee2e6; border-radius: 4px; font-size: 12px; color: #212529; }
  .list div { height: 37px; padding: 11px 16px 0; line-height: 15px; border-bottom: 1px solid #dee2e6; }
  .scrollbar { width: 17px; background: #f1f1f1; display: flex; flex-direction: column; }
  .thumb { height: 280px; margin: 0 2px auto; background: #c1c1c1; }
  .status { position: absolute; left: 0; bottom: 0; width: 695px; height: 22px; background: #02393e; border-radius: 0 4px 0 0; border-top: 1px solid #cfdcdd; border-right: 1px solid #cfdcdd; padding: 2px 0 0 5px; font-family: "Open Sans", sans-serif; }
  .taskbar { height: 81px; flex: none; display: flex; background: #101010; color: #fff; }
  .start { width: 48px; display: flex; align-items: center; justify-content: center; }
  .find { width: 344px; background: #3e3e3e; border: 1px solid #5e5e5e; display: flex; align-items: center; gap: 12px; padding: 0 0 1px 11px; color: #d8d8d8; font-size: 14.800px; letter-spacing: -0.430px; }
  .apps { display: grid; grid-template-columns: repeat(12, 49px); grid-template-rows: 41px 40px; margin-left: 3px; align-content: start; }
  .app { position: relative; display: flex; justify-content: center; padding-top: 8px; margin-right: 1px; }
  .bar { position: absolute; bottom: 0; left: 4px; width: 40px; height: 2px; background: #76b9ed; }
  .multi .bar { bottom: 1px; background: linear-gradient(90deg, #76b9ed 31px, #476f8f 31px 32px, #5288b3 32px); }
  .current { background: #333; }
  .current .bar { left: 0; width: 48px; }
  .tray { margin-left: auto; display: flex; align-items: center; font-size: 12px; }
  .match { font-size: 14px; margin: 2px 17px 0 8px; width: 38px; letter-spacing: -0.250px; }
  .tray-icons { display: grid; grid-template-columns: 25px 22px 25px 16px; row-gap: 24px; margin-left: 10px; }
  .clock { width: 70px; margin-left: 5px; display: flex; flex-direction: column; align-items: center; line-height: 22px; font-size: 12px; letter-spacing: -0.500px; }
  .notice { position: relative; margin-left: 14px; width: 36px; }
  .badge { position: absolute; left: 6px; top: 6px; width: 17px; height: 17px; border-radius: 50%; background: #2f2f2f; border: 1px solid #777; text-align: center; line-height: 15px; font-size: 11px; }
  .edge { width: 1px; height: 81px; background: #555; margin-right: 4px; }
</style>
